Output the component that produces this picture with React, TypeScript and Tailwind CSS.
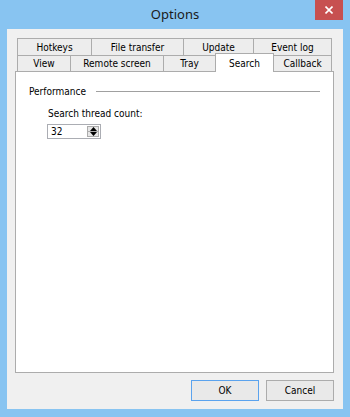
const ui = "font-['DejaVu_Sans_Condensed','Liberation_Sans',sans-serif] text-[10px] text-black"

function Tab({ label, w, first }: { label: string; w: number; first?: boolean }) {
  return (
    <div
      className={`flex h-full items-center justify-center border-x border-t border-[#acacac] bg-[#ededed] ${first ? '' : '-ml-px'}`}
      style={{ width: w }}
    >
      {label}
    </div>
  )
}

function Spinner() {
  return (
    <div className="flex h-[15px] w-[54px] items-center border border-[#abadb3] bg-white">
      <span className="flex-1 pl-[3px] leading-none">32</span>
      <div className="mr-px flex flex-col">
        <div className="flex h-[6px] w-[12px] items-center justify-center border border-[#acacac] bg-[#e6e6e6]">
          <svg width="7" height="4" viewBox="0 0 7 4"><path d="M3.5 0 L7 4 L0 4 Z" fill="#000" /></svg>
        </div>
        <div className="-mt-px flex h-[6px] w-[12px] items-center justify-center border border-[#acacac] bg-[#e6e6e6]">
          <svg width="7" height="4" viewBox="0 0 7 4"><path d="M0 0 L7 0 L3.5 4 Z" fill="#000" /></svg>
        </div>
      </div>
    </div>
  )
}

export default function App() {
  return (
    <div className={`flex h-[417px] w-[350px] flex-col bg-[#88c4f1] ${ui}`}>
      {/* title bar */}
      <div className="relative flex h-[29px] shrink-0 items-center justify-center">
        <span className="font-['Noto_Sans',sans-serif] text-[13px] text-[#1a1a1a]">Options</span>
        <div className="absolute right-[7px] top-0 flex h-[20px] w-[28px] items-center justify-center bg-[#c75050]">
          <svg width="8" height="8" viewBox="0 0 8 8">
            <path d="M0.5 0.5 L7.5 7.5 M7.5 0.5 L0.5 7.5" stroke="#fff" strokeWidth="1.6" />
          </svg>
        </div>
      </div>

      {/* client area */}
      <div className="mx-[7px] mb-[8px] flex flex-1 flex-col bg-[#f0f0f0] pb-[8px] pl-[8px] pr-[9px] pt-[9px]">
        <div className="ml-[2px] flex h-[17px]">
          <Tab label="Hotkeys" w={75} first />
          <Tab label="File transfer" w={93} />
          <Tab label="Update" w={71} />
          <Tab label="Event log" w={79} />
        </div>
        <div className="ml-[2px] flex h-[16px] items-end">
          <Tab label="View" w={54} first />
          <Tab label="Remote screen" w={94} />
          <Tab label="Tray" w={53} />
          <div className="relative z-10 -mb-px -ml-px flex h-[19px] w-[59px] items-start justify-center border-x border-t border-[#acacac] bg-white pt-[2px]">
            Search
          </div>
          <Tab label="Callback" w={59} />
        </div>

        {/* page */}
        <div className="flex h-[302px] flex-col border border-[#acacac] bg-white pl-[13px] pr-[13px] pt-[13px]">
          <div className="flex h-[13px] items-center">
            <span>Performance</span>
            <div className="ml-[10px] h-px flex-1 bg-[#a0a0a0]" />
          </div>
          <div className="ml-[19px] mt-[9px] flex h-[13px] items-center">Search thread count:</div>
          <div className="ml-[18px] mt-[4px]">
            <Spinner />
          </div>
        </div>

        <div className="mt-[7px] flex justify-end gap-[7px]">
          <button className="h-[21px] w-[68px] border border-[#5ba3ee] bg-[#e9e9e9]">OK</button>
          <button className="h-[21px] w-[68px] border border-[#acacac] bg-[#e9e9e9]">Cancel</button>
        </div>
      </div>
    </div>
  )
}
